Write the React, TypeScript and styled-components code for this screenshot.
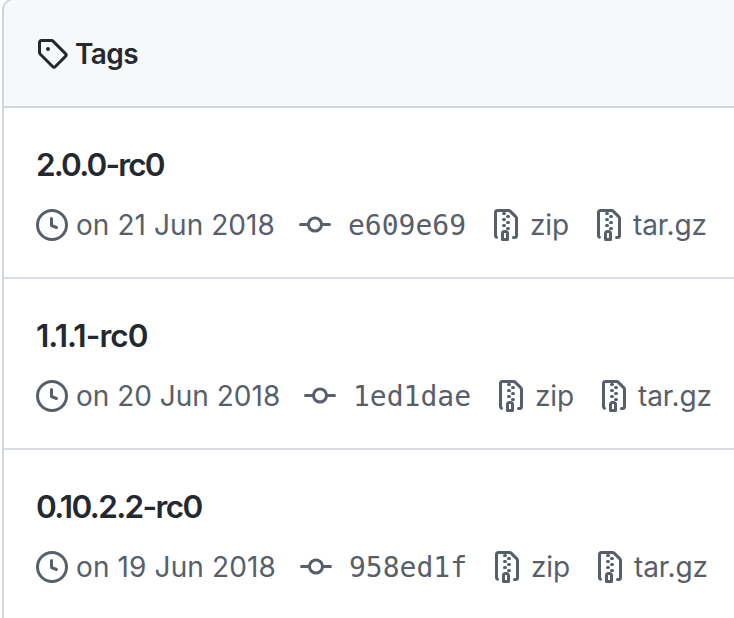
import React from "react";
import styled, { createGlobalStyle } from "styled-components";

const GlobalStyle = createGlobalStyle`
  html, body { margin: 0; background: #fff; }
  body { overflow: hidden; }
  *, *::before, *::after { box-sizing: border-box; }
`;

const Viewport = styled.main`
  width: 734px;
  height: 618px;
  overflow: hidden;
  padding-left: 2px;
  font-family: Inter, "Liberation Sans", sans-serif;
  color: #24292f;
`;

const Panel = styled.section`
  width: 800px;
  height: 660px;
  margin-top: -2px;
  border: 2px solid #d0d7de;
  border-radius: 12px;
  overflow: hidden;
`;

const Header = styled.header`
  display: flex;
  align-items: center;
  gap: 7px;
  height: 108px;
  padding: 0 32px;
  background: #f6f8fa;
  border-bottom: 2px solid #d0d7de;
`;

const Heading = styled.h2`
  margin: 0;
  padding-top: 1px;
  font-size: 28px;
  line-height: 42px;
  font-weight: 600;
  letter-spacing: -0.6px;
`;

const Row = styled.article`
  height: 171px;
  padding: 33px 32px 0;
  border-bottom: 2px solid #d8dee4;
`;

const TagName = styled.h3<{ $tracking: number }>`
  margin: 0;
  font-size: 31.5px;
  line-height: 48px;
  font-weight: 600;
  letter-spacing: ${(p) => p.$tracking}px;
`;

const MetaList = styled.div`
  display: flex;
  align-items: center;
  height: 42px;
  margin-top: 15px;
  color: #57606a;
  font-size: 28px;
  line-height: 42px;
  white-space: nowrap;
`;

const Meta = styled.span<{ $width: number; $gap: number }>`
  display: flex;
  flex: none;
  align-items: center;
  gap: ${(p) => p.$gap}px;
  width: ${(p) => p.$width}px;
`;

const Label = styled.span<{ $tracking: number }>`
  letter-spacing: ${(p) => p.$tracking}px;
`;

const Hash = styled.code`
  padding-top: 2px;
  font-family: "DejaVu Sans Mono", monospace;
  font-size: 28px;
`;

const Svg = styled.svg`
  flex: none;
  width: 32px;
  height: 32px;
  fill: currentColor;
`;

const paths = {
  tag: "M2.5 7.775V2.75a.25.25 0 01.25-.25h5.025a.25.25 0 01.177.073l6.25 6.25a.25.25 0 010 .354l-5.025 5.025a.25.25 0 01-.354 0l-6.25-6.25a.25.25 0 01-.073-.177zm-1.5 0V2.75C1 1.784 1.784 1 2.75 1h5.025c.464 0 .91.184 1.238.513l6.25 6.25a1.75 1.75 0 010 2.474l-5.026 5.026a1.75 1.75 0 01-2.474 0l-6.25-6.25A1.75 1.75 0 011 7.775zM6 5a1 1 0 100 2 1 1 0 000-2z",
  clock: "M1.5 8a6.5 6.5 0 1113 0 6.5 6.5 0 01-13 0zM8 0a8 8 0 100 16A8 8 0 008 0zm.5 4.75a.75.75 0 00-1.5 0v3.5a.75.75 0 00.471.696l2.5 1a.75.75 0 00.557-1.392L8.5 7.742V4.75z",
  commit: "M10.5 7.75a2.5 2.5 0 11-5 0 2.5 2.5 0 015 0zm1.43.75a4.002 4.002 0 01-7.86 0H.75a.75.75 0 110-1.5h3.32a4.001 4.001 0 017.86 0h3.32a.75.75 0 110 1.5h-3.32z",
  zip: "M3.5 1.75a.25.25 0 01.25-.25h3a.75.75 0 000 1.5h.5a.75.75 0 000-1.5h2.086a.25.25 0 01.177.073l2.914 2.914a.25.25 0 01.073.177v8.586a.25.25 0 01-.25.25h-.5a.75.75 0 000 1.5h.5A1.75 1.75 0 0014 13.25V4.664c0-.464-.184-.909-.513-1.237L10.573.513A1.75 1.75 0 009.336 0H3.75A1.75 1.75 0 002 1.75v11.5c0 .649.353 1.214.874 1.515a.75.75 0 10.752-1.298.25.25 0 01-.126-.217V1.75zM8.75 3a.75.75 0 000 1.5h.5a.75.75 0 000-1.5h-.5zM6 5.25a.75.75 0 01.75-.75h.5a.75.75 0 010 1.5h-.5A.75.75 0 016 5.25zm2 1.5A.75.75 0 018.75 6h.5a.75.75 0 010 1.5h-.5A.75.75 0 018 6.75zm-1.25.75a.75.75 0 000 1.5h.5a.75.75 0 000-1.5h-.5zM8 9.75A.75.75 0 018.75 9h.5a.75.75 0 010 1.5h-.5A.75.75 0 018 9.75zm-.75.75a1.75 1.75 0 00-1.75 1.75v3c0 .414.336.75.75.75h2.5a.75.75 0 00.75-.75v-3a1.75 1.75 0 00-1.75-1.75h-.5zM7 12.25a.25.25 0 01.25-.25h.5a.25.25 0 01.25.25v2.25H7v-2.25z",
};

const Icon = ({ name }: { name: keyof typeof paths }) => (
  <Svg viewBox="0 0 16 16" aria-hidden="true">
    <path fillRule="evenodd" d={paths[name]} />
  </Svg>
);

const tags = [
  { name: "2.0.0-rc0", nameTracking: -1.85, date: "on 21 Jun 2018", dateTracking: 0.07, dateWidth: 263, hash: "e609e69" },
  { name: "1.1.1-rc0", nameTracking: -0.95, date: "on 20 Jun 2018", dateTracking: 0, dateWidth: 268, hash: "1ed1dae" },
  { name: "0.10.2.2-rc0", nameTracking: -1.65, date: "on 19 Jun 2018", dateTracking: 0.12, dateWidth: 264, hash: "958ed1f" },
];

export default function App() {
  return (
    <Viewport>
      <GlobalStyle />
      <Panel>
        <Header>
          <Icon name="tag" />
          <Heading>Tags</Heading>
        </Header>
        {tags.map((tag) => (
          <Row key={tag.name}>
            <TagName $tracking={tag.nameTracking}>{tag.name}</TagName>
            <MetaList>
              <Meta $width={tag.dateWidth} $gap={8}>
                <Icon name="clock" />
                <Label $tracking={tag.dateTracking}>{tag.date}</Label>
              </Meta>
              <Meta $width={191} $gap={17}>
                <Icon name="commit" />
                <Hash>{tag.hash}</Hash>
              </Meta>
              <Meta $width={103} $gap={8}>
                <Icon name="zip" />
                <Label $tracking={-0.1}>zip</Label>
              </Meta>
              <Meta $width={130} $gap={8}>
                <Icon name="zip" />
                <Label $tracking={-0.1}>tar.gz</Label>
              </Meta>
            </MetaList>
          </Row>
        ))}
      </Panel>
    </Viewport>
  );
}
